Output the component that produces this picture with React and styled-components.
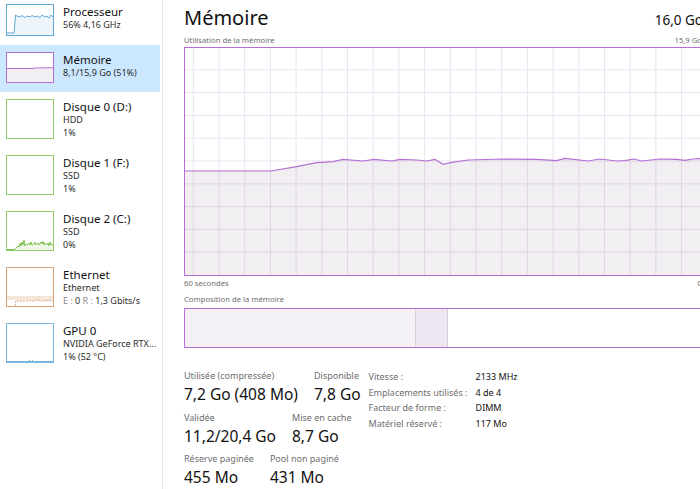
import React from 'react';
import styled, { createGlobalStyle } from 'styled-components';

const GlobalStyle = createGlobalStyle`
  html, body {
    margin: 0;
    padding: 0;
    background: #ffffff;
    overflow: hidden;
  }
  body {
    font-family: "Noto Sans", "Open Sans", sans-serif;
    color: #1a1a1a;
  }
`;

const Window = styled.div`
  display: flex;
  width: 700px;
  height: 489px;
  overflow: hidden;
  background: #fff;
`;

const Sidebar = styled.div`
  flex: none;
  width: 162px;
  border-right: 1px solid #e6e6e6;
  margin-top: -3px;
`;

const Item = styled.div`
  display: flex;
  align-items: flex-start;
  gap: 9px;
  width: 160px;
  box-sizing: border-box;
  padding: 7px 0 9px 6px;
  background: ${(p) => (p.$active ? '#cce8ff' : 'transparent')};
`;

const Thumb = styled.div`
  flex: none;
  width: 48px;
  height: ${(p) => p.$h}px;
  box-sizing: border-box;
  border: 1px solid ${(p) => p.$color};
  background: #fff;
  svg {
    display: block;
  }
`;

const ItemText = styled.div`
  display: flex;
  flex-direction: column;
  min-width: 0;
`;

const ItemTitle = styled.div`
  font-size: 11.5px;
  line-height: 15px;
  color: #111;
`;

const ItemSub = styled.div`
  font-size: 9px;
  line-height: 12.5px;
  color: #2b2b2b;
  white-space: nowrap;
`;

const Dim = styled.span`
  color: #8a8a8a;
`;

const Main = styled.div`
  flex: none;
  width: 518px;
  padding-left: 21px;
`;

const Header = styled.div`
  display: flex;
  justify-content: space-between;
  align-items: center;
  height: 33px;
  padding-top: 1px;
`;

const Title = styled.h1`
  margin: 0;
  font-size: 20px;
  font-weight: 400;
  line-height: 28px;
  color: #111;
`;

const Total = styled.div`
  font-size: 13.5px;
  line-height: 16px;
  color: #111;
  margin-top: 5px;
  margin-right: -1px;
`;

const Caption = styled.div`
  display: flex;
  justify-content: space-between;
  font-size: 7.7px;
  line-height: 12px;
  color: #6e6e6e;
  margin-top: ${(p) => p.$mt || 0}px;
`;

const Graph = styled.div`
  margin-top: 1px;
  height: 229px;
  box-sizing: border-box;
  border: 1px solid #b36fd1;
  svg {
    display: block;
  }
`;

const Bar = styled.div`
  display: flex;
  margin-top: 3px;
  height: 40px;
  box-sizing: border-box;
  border: 1px solid #b36fd1;
`;

const Segment = styled.div`
  flex: none;
  width: ${(p) => p.$w}px;
  background: ${(p) => p.$bg};
  border-right: 1px solid #dccbe3;
`;

const Stats = styled.div`
  display: flex;
  align-items: flex-start;
  gap: 8px;
  margin-top: 21px;
`;

const StatsCol = styled.div`
  flex: none;
  display: flex;
  flex-direction: column;
  gap: 5.5px;
`;

const StatRow = styled.div`
  display: flex;
  gap: 16px;
`;

const Stat = styled.div`
  display: flex;
  flex-direction: column;
  align-items: flex-start;
`;

const StatLabel = styled.div`
  font-size: 9px;
  line-height: 14px;
  color: #6e6e6e;
  white-space: nowrap;
`;

const StatValue = styled.div`
  font-size: 15.5px;
  line-height: 22px;
  color: #111;
  white-space: nowrap;
`;

const Info = styled.div`
  display: grid;
  grid-template-columns: 107px auto;
  grid-auto-rows: 15.5px;
  font-size: 9px;
  line-height: 15.5px;
  white-space: nowrap;
`;

const InfoKey = styled.div`
  color: #6e6e6e;
`;

const InfoVal = styled.div`
  color: #111;
`;

const linePts = [
  [0, 123], [86, 123], [111.7, 118.7], [131.7, 114.7], [148, 113.7], [158, 111.3],
  [178, 113], [189, 111.3], [206.7, 113], [215, 111.3], [231.7, 112], [241.7, 113],
  [250, 111.3], [258, 116.3], [266.7, 114.3], [283, 112], [318, 111], [351.7, 111.3],
  [371.7, 112.7], [380, 110.3], [403, 113], [415, 111], [431.7, 113], [440, 112.7],
  [449, 111], [456.7, 113], [475, 111], [491.7, 111.3], [500, 112.3], [507.7, 111], [520, 110.5],
];

const MemoryGraph = () => {
  const w = 516;
  const h = 227;
  const line = linePts.map((p) => p.join(',')).join(' ');
  const area = `0,${h} ${line} ${w + 4},${h}`;
  const vx = Array.from({ length: 21 }, (_, i) => 8.3 + i * 25.7);
  const hy = Array.from({ length: 9 }, (_, i) => 22.8 * (i + 1) - 1);
  return (
    <svg width={w} height={h} viewBox={`0 0 ${w} ${h}`}>
      {vx.map((x) => (
        <line key={`v${x}`} x1={x} y1={0} x2={x} y2={h} stroke="#ede2f1" strokeWidth="1" />
      ))}
      {hy.map((y) => (
        <line key={`h${y}`} x1={0} y1={y} x2={w} y2={y} stroke="#ede2f1" strokeWidth="1" />
      ))}
      <polygon points={area} fill="rgba(110,80,120,0.095)" />
      <polyline points={line} fill="none" stroke="#b36fd1" strokeWidth="1.2" />
    </svg>
  );
};

const CpuThumb = () => (
  <svg width="46" height="30" viewBox="0 0 46 30">
    <polygon
      points="0,30 0,28 7,28 8.5,10 10,11 13,12 15,10.5 18,12.5 20,11 23,12 25,10.5 28,12 30,11 33,12.5 35,10 38,12 40,11 42,13 44,10 46,12 46,30"
      fill="#edf4fa"
    />
    <polyline
      points="0,28 7,28 8.5,10 10,11 13,12 15,10.5 18,12.5 20,11 23,12 25,10.5 28,12 30,11 33,12.5 35,10 38,12 40,11 42,13 44,10 46,12"
      fill="none"
      stroke="#5fa7d7"
      strokeWidth="1"
    />
  </svg>
);

const MemThumb = () => (
  <svg width="46" height="29" viewBox="0 0 46 29">
    <polygon points="0,29 0,15.5 26,15.5 28,15 46,14.7 46,29" fill="#f2eff4" />
    <polyline points="0,15.5 26,15.5 28,15 46,14.7" fill="none" stroke="#b36fd1" strokeWidth="1" />
  </svg>
);

const DiskThumb = () => {
  const spikes = [
    [9, 36], [11, 34], [12, 35], [13, 31], [14, 34], [15, 30], [16, 33], [17, 28], [18, 34],
    [19, 32], [20, 33], [22, 31], [23, 33], [24, 30], [25, 33], [27, 32], [28, 30], [29, 33],
    [31, 31], [32, 33], [34, 30], [35, 32], [36, 29], [37, 33], [38, 31], [40, 33], [41, 31],
    [42, 34], [43, 30], [44, 33], [46, 32],
  ];
  const pts = [[0, 37.5], [8, 37.5], ...spikes];
  const line = pts.map((p) => p.join(',')).join(' ');
  return (
    <svg width="46" height="38" viewBox="0 0 46 38">
      <polygon points={`0,38 ${line} 46,38`} fill="#eef7e8" />
      <polyline points={line} fill="none" stroke="#7fc454" strokeWidth="1" />
    </svg>
  );
};

const EthThumb = () => (
  <svg width="46" height="38" viewBox="0 0 46 38">
    <rect x="0" y="28" width="46" height="4" fill="#f6e6d8" />
    <polyline points="8,38 9,33 20,33 22,32.5 26,33 30,32 35,33 40,32.5 46,33" fill="none" stroke="#d5a27a" strokeWidth="1" strokeDasharray="2 1" />
  </svg>
);

const GpuThumb = () => (
  <svg width="46" height="38" viewBox="0 0 46 38">
    <polyline points="0,37.5 46,37.5" fill="none" stroke="#7ab5df" strokeWidth="1" />
    <rect x="22" y="36" width="1" height="1" fill="#7ab5df" />
    <rect x="25" y="36" width="1" height="1" fill="#7ab5df" />
  </svg>
);

const items = [
  { title: 'Processeur', lines: ['56% 4,16 GHz'], color: '#5fa7d7', h: 32, thumb: <CpuThumb /> },
  { title: 'Mémoire', lines: ['8,1/15,9 Go (51%)'], color: '#b36fd1', h: 31, thumb: <MemThumb />, active: true },
  { title: 'Disque 0 (D:)', lines: ['HDD', '1%'], color: '#8fca6b', h: 40, thumb: null },
  { title: 'Disque 1 (F:)', lines: ['SSD', '1%'], color: '#8fca6b', h: 40, thumb: null },
  { title: 'Disque 2 (C:)', lines: ['SSD', '0%'], color: '#8fca6b', h: 40, thumb: <DiskThumb /> },
  {
    title: 'Ethernet',
    lines: [
      'Ethernet',
      <>
        <Dim>E :</Dim> 0 <Dim>R :</Dim> 1,3 Gbits/s
      </>,
    ],
    color: '#d5a27a',
    h: 40,
    thumb: <EthThumb />,
  },
  { title: 'GPU 0', lines: ['NVIDIA GeForce RTX...', '1% (52 °C)'], color: '#7ab5df', h: 40, thumb: <GpuThumb /> },
];

export default function App() {
  return (
    <>
      <GlobalStyle />
      <Window>
        <Sidebar>
          {items.map((it) => (
            <Item key={it.title} $active={it.active}>
              <Thumb $color={it.color} $h={it.h}>
                {it.thumb}
              </Thumb>
              <ItemText>
                <ItemTitle>{it.title}</ItemTitle>
                {it.lines.map((l, i) => (
                  <ItemSub key={i}>{l}</ItemSub>
                ))}
              </ItemText>
            </Item>
          ))}
        </Sidebar>
        <Main>
          <Header>
            <Title>Mémoire</Title>
            <Total>16,0 Go</Total>
          </Header>
          <Caption>
            <span>Utilisation de la mémoire</span>
            <span>15,9 Go</span>
          </Caption>
          <Graph>
            <MemoryGraph />
          </Graph>
          <Caption $mt={1}>
            <span>60 secondes</span>
            <span>0</span>
          </Caption>
          <Caption $mt={4}>
            <span>Composition de la mémoire</span>
          </Caption>
          <Bar>
            <Segment $w={230} $bg="#f3f1f5" />
            <Segment $w={31} $bg="#eee6f2" />
          </Bar>
          <Stats>
            <StatsCol>
              <StatRow>
                <Stat>
                  <StatLabel>Utilisée (compressée)</StatLabel>
                  <StatValue>7,2 Go (408 Mo)</StatValue>
                </Stat>
                <Stat>
                  <StatLabel>Disponible</StatLabel>
                  <StatValue>7,8 Go</StatValue>
                </Stat>
              </StatRow>
              <StatRow>
                <Stat>
                  <StatLabel>Validée</StatLabel>
                  <StatValue>11,2/20,4 Go</StatValue>
                </Stat>
                <Stat>
                  <StatLabel>Mise en cache</StatLabel>
                  <StatValue>8,7 Go</StatValue>
                </Stat>
              </StatRow>
              <StatRow>
                <Stat>
                  <StatLabel>Réserve paginée</StatLabel>
                  <StatValue>455 Mo</StatValue>
                </Stat>
                <Stat>
                  <StatLabel>Pool non paginé</StatLabel>
                  <StatValue>431 Mo</StatValue>
                </Stat>
              </StatRow>
            </StatsCol>
            <Info>
              <InfoKey>Vitesse :</InfoKey>
              <InfoVal>2133 MHz</InfoVal>
              <InfoKey>Emplacements utilisés :</InfoKey>
              <InfoVal>4 de 4</InfoVal>
              <InfoKey>Facteur de forme :</InfoKey>
              <InfoVal>DIMM</InfoVal>
              <InfoKey>Matériel réservé :</InfoKey>
              <InfoVal>117 Mo</InfoVal>
            </Info>
          </Stats>
        </Main>
      </Window>
    </>
  );
}
